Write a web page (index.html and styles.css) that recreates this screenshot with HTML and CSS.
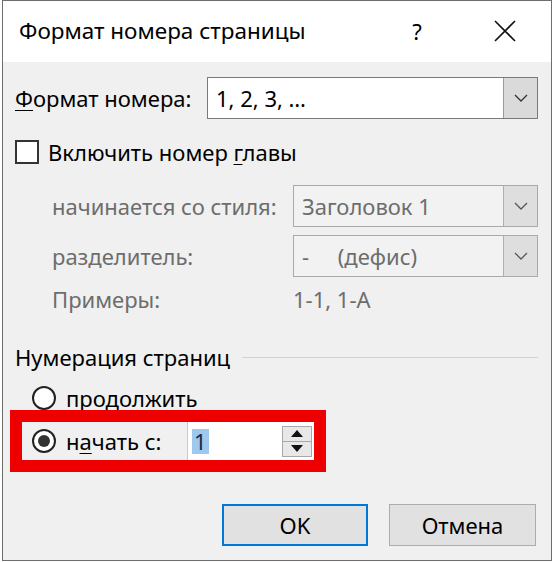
FILE: index.html
```html
<!DOCTYPE html>
<html lang="ru">
<head>
<meta charset="utf-8">
<title>Формат номера страницы</title>
<link rel="stylesheet" href="styles.css">
</head>
<body>
<div class="window">
  <div class="titlebar">
    <span class="title">Формат номера страницы</span>
    <span class="help">?</span>
    <span class="close">
      <svg width="22" height="22" viewBox="0 0 22 22"><path d="M1 1 L21 21 M21 1 L1 21" stroke="#111" stroke-width="1.6" fill="none"/></svg>
    </span>
  </div>
  <div class="content">
    <div class="row row-format">
      <span class="lbl lbl-format"><u>Ф</u>ормат номера:</span>
      <div class="select">
        <span class="val">1, 2, 3, …</span>
        <span class="btn"><svg width="14" height="8" viewBox="0 0 14 8"><path d="M1 1 L7 7 L13 1" stroke="#333" stroke-width="1.3" fill="none"/></svg></span>
      </div>
    </div>
    <div class="row row-check">
      <span class="checkbox"></span>
      <span class="lbl">Включить номер <u>г</u>лавы</span>
    </div>
    <div class="row row-sub row-style">
      <span class="lbl dis sub-lbl">начинается со стиля:</span>
      <div class="select select-dis">
        <span class="val">Заголовок 1</span>
        <span class="btn"><svg width="14" height="8" viewBox="0 0 14 8"><path d="M1 1 L7 7 L13 1" stroke="#555" stroke-width="1.3" fill="none"/></svg></span>
      </div>
    </div>
    <div class="row row-sub row-sep">
      <span class="lbl dis sub-lbl">разделитель:</span>
      <div class="select select-dis">
        <span class="val">-&nbsp;&nbsp;&nbsp;&nbsp;&nbsp;(дефис)</span>
        <span class="btn"><svg width="14" height="8" viewBox="0 0 14 8"><path d="M1 1 L7 7 L13 1" stroke="#555" stroke-width="1.3" fill="none"/></svg></span>
      </div>
    </div>
    <div class="row row-sub row-examples">
      <span class="lbl dis sub-lbl">Примеры:</span>
      <span class="lbl dis">1-1, 1-A</span>
    </div>
    <div class="row row-group">
      <span class="lbl">Нумерация страниц</span>
      <span class="group-line"></span>
    </div>
    <div class="row row-radio">
      <span class="radio"></span>
      <span class="lbl"><u>п</u>родолжить</span>
    </div>
    <div class="highlight">
      <div class="row row-start">
        <span class="radio radio-on"></span>
        <span class="lbl">н<u>а</u>чать с:</span>
        <div class="spin-input">
          <span class="spin-val"><span class="sel">1</span></span>
          <span class="spinner">
            <span class="spin-btn"><svg width="12" height="7" viewBox="0 0 12 7"><path d="M0 7 L6 0 L12 7 Z" fill="#111"/></svg></span>
            <span class="spin-btn"><svg width="12" height="7" viewBox="0 0 12 7"><path d="M0 0 L6 7 L12 0 Z" fill="#111"/></svg></span>
          </span>
        </div>
      </div>
    </div>
    <div class="buttons">
      <span class="button button-default">OK</span>
      <span class="button">Отмена</span>
    </div>
  </div>
</div>
</body>
</html>
```

FILE: styles.css
```css
html, body {
  margin: 0;
  padding: 0;
  background: #ffffff;
}

body {
  font-family: "Noto Sans", "Open Sans", sans-serif;
  font-size: 22px;
  color: #000;
}

.window {
  box-sizing: border-box;
  width: 550px;
  height: 561px;
  margin-left: 2px;
  border: 1px solid #6e6e6e;
  background: #f0f0f0;
  display: flex;
  flex-direction: column;
}

.titlebar {
  height: 59px;
  background: #ffffff;
  display: flex;
  align-items: center;
  padding: 0 23px 2px 16px;
}

.title {
  flex: 1;
  font-size: 22.5px;
}

.help {
  width: 40px;
  text-align: center;
  font-size: 22px;
  margin-right: 45px;
}

.close {
  width: 46px;
  display: flex;
  justify-content: center;
  align-items: center;
}

.content {
  padding: 15px 13px 0 12px;
  display: flex;
  flex-direction: column;
}

.row {
  display: flex;
  align-items: center;
}

.lbl {
  white-space: nowrap;
  line-height: 1;
}

u {
  text-underline-offset: 3px;
  text-decoration-thickness: 1px;
}

.dis {
  color: #6d6d6d;
}

.row-format {
  height: 42px;
}

.lbl-format {
  width: 192px;
}

.select {
  flex: 1;
  height: 42px;
  box-sizing: border-box;
  border: 1px solid #7a7a7a;
  background: #ffffff;
  display: flex;
  align-items: stretch;
}

.select .val {
  flex: 1;
  display: flex;
  align-items: center;
  padding-left: 8px;
  white-space: nowrap;
}

.select .btn {
  width: 33px;
  background: #dadada;
  border-left: 1px solid #9a9a9a;
  display: flex;
  align-items: center;
  justify-content: center;
}

.select-dis {
  background: #f2f2f2;
  border-color: #a9a9a9;
  color: #6d6d6d;
}

.select-dis .btn {
  background: #dedede;
  border-left-color: #b0b0b0;
}

.row-check {
  height: 24px;
  margin-top: 21px;
  gap: 9px;
}

.checkbox {
  width: 24px;
  height: 24px;
  box-sizing: border-box;
  border: 2px solid #333;
  background: #fff;
}

.row-sub {
  padding-left: 37px;
}

.sub-lbl {
  width: 241px;
}

.row-style {
  height: 42px;
  margin-top: 21px;
}

.row-sep {
  height: 42px;
  margin-top: 8px;
}

.row-examples {
  height: 30px;
  margin-top: 7px;
}

.row-group {
  height: 30px;
  margin-top: 28px;
}

.group-line {
  flex: 1;
  height: 1px;
  background: #d3d3d3;
  margin-left: 12px;
}

.row-radio {
  height: 24px;
  margin-top: 14px;
  padding-left: 17px;
  gap: 10px;
}

.radio {
  width: 24px;
  height: 24px;
  box-sizing: border-box;
  border: 2px solid #222;
  border-radius: 50%;
  background: #fff;
  display: flex;
  align-items: center;
  justify-content: center;
}

.radio-on::after {
  content: "";
  width: 12px;
  height: 12px;
  border-radius: 50%;
  background: #333;
}

.highlight {
  box-sizing: border-box;
  width: 316px;
  height: 62px;
  margin-left: -5px;
  border: 12px solid #ee0000;
}

.row-start {
  height: 38px;
  padding-left: 10px;
  gap: 10px;
}

.spin-input {
  margin-left: auto;
  width: 127px;
  height: 38px;
  box-sizing: border-box;
  background: #ffffff;
  border-left: 1px solid #c8c8c8;
  display: flex;
  align-items: center;
  padding: 0 2px 0 4px;
}

.spin-val {
  flex: 1;
  display: flex;
  align-items: center;
}

.sel {
  background: #9fc8ee;
  color: #1a2a40;
  padding: 2px 2px;
  line-height: 21px;
}

.spinner {
  width: 30px;
  height: 31px;
  display: flex;
  flex-direction: column;
  box-sizing: border-box;
  border: 1px solid #a8a8a8;
  background: #e8e8e8;
}

.spin-btn {
  flex: 1;
  display: flex;
  align-items: center;
  justify-content: center;
}

.spin-btn + .spin-btn {
  border-top: 1px solid #a8a8a8;
}

.buttons {
  display: flex;
  justify-content: flex-end;
  gap: 21px;
  margin-top: 32px;
  padding-right: 2px;
}

.button {
  box-sizing: border-box;
  width: 147px;
  height: 42px;
  background: #e1e1e1;
  border: 1px solid #adadad;
  display: flex;
  align-items: center;
  justify-content: center;
}

.button-default {
  width: 146px;
  border: 2px solid #0078d7;
}
```
